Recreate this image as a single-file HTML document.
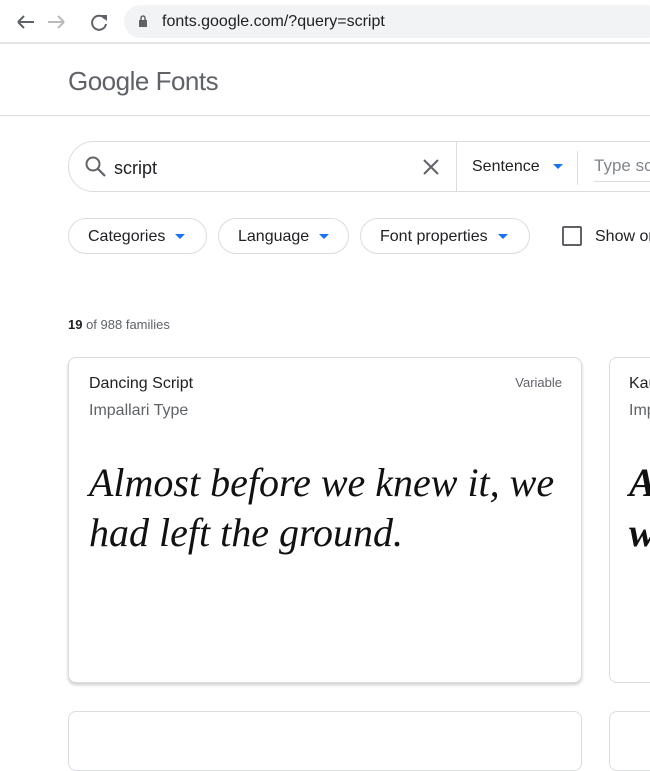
<!DOCTYPE html><html><head><style>
body{margin:0;width:650px;height:733px;overflow:hidden;background:#fff;font-family:"Liberation Sans",sans-serif;position:relative}
.a{position:absolute;white-space:nowrap}
.chip{position:absolute;top:218px;height:36px;border:1px solid #dadce0;border-radius:18px;box-sizing:border-box;font-size:16px;color:#202124;line-height:36px;padding-left:19px;white-space:nowrap}
.tri{display:inline-block;width:0;height:0;border-left:5px solid transparent;border-right:5px solid transparent;border-top:5px solid #1a73e8;vertical-align:middle;margin-left:10px}
.card{position:absolute;border:1px solid #dadce0;border-radius:8px;box-sizing:border-box;background:#fff}
.script{font-family:"Liberation Serif",serif;font-style:italic;font-size:40px;line-height:50px;color:#111;white-space:normal}
</style></head><body>
<div class="a" style="left:0;top:0;width:650px;height:42px;background:#fff;border-bottom:2px solid #e4e4e4"></div>
<svg class="a" style="left:14px;top:12px" width="100" height="20"><path d="M4 10H20M4 10L10 4M4 10L10 16" stroke="#5f6368" stroke-width="2" fill="none"/><path d="M34 10H50M50 10L44 4M50 10L44 16" stroke="#bbb" stroke-width="2" fill="none"/><path d="M91 7A7 7 0 1 0 92 12" stroke="#5f6368" stroke-width="2" fill="none"/><path d="M86 3L93 3L93 9Z" fill="#5f6368"/></svg>
<div class="a" style="left:124px;top:5px;width:540px;height:33px;border-radius:17px;background:#f1f3f4"></div>
<svg class="a" style="left:138px;top:14px" width="10" height="14"><rect x="1" y="6" width="8" height="7" fill="#5f6368"/><path d="M3 6V4A2 2 0 0 1 7 4V6" stroke="#5f6368" stroke-width="1.5" fill="none"/></svg>
<div class="a" style="left:162px;top:13px;font-size:16px;color:#202124">fonts.google.com/?query=script</div>
<div class="a" style="left:68px;top:66px;font-size:26px;color:#5f6368;letter-spacing:-0.5px">Google Fonts</div>
<div class="a" style="left:0;top:115px;width:650px;height:1px;background:#dadce0"></div>
<div class="a" style="left:68px;top:141px;width:620px;height:51px;border:1px solid #dadce0;border-radius:26px;box-sizing:border-box"></div>
<svg class="a" style="left:84px;top:155px" width="24" height="24"><circle cx="9" cy="9" r="6.5" stroke="#5f6368" stroke-width="2" fill="none"/><path d="M14 14L21 21" stroke="#5f6368" stroke-width="2.2"/></svg>
<div class="a" style="left:114px;top:158px;font-size:18px;color:#202124">script</div>
<svg class="a" style="left:422px;top:158px" width="18" height="18"><path d="M2 2L16 16M16 2L2 16" stroke="#5f6368" stroke-width="2"/></svg>
<div class="a" style="left:456px;top:142px;width:1px;height:49px;background:#dadce0"></div>
<div class="a" style="left:472px;top:158px;font-size:16px;color:#202124">Sentence<span class="tri" style="margin-left:13px"></span></div>
<div class="a" style="left:577px;top:151px;width:1px;height:34px;background:#dadce0"></div>
<div class="a" style="left:594px;top:156px;font-size:17px;color:#80868b;border-bottom:1px solid #dadce0;padding-bottom:5px;width:80px">Type sc</div>
<div class="chip" style="left:68px;width:139px">Categories<span class="tri"></span></div>
<div class="chip" style="left:218px;width:131px">Language<span class="tri"></span></div>
<div class="chip" style="left:360px;width:170px">Font properties<span class="tri"></span></div>
<div class="a" style="left:562px;top:226px;width:16px;height:16px;border:2px solid #5f6368;border-radius:2px"></div>
<div class="a" style="left:595px;top:228px;font-size:16px;color:#202124">Show only</div>
<div class="a" style="left:68px;top:317px;font-size:13px;color:#5f6368"><b style="color:#202124">19</b> of 988 families</div>
<div class="card" style="left:68px;top:357px;width:514px;height:326px;box-shadow:0 2px 3px rgba(0,0,0,0.2)">
<div class="a" style="left:20px;top:17px;font-size:16px;color:#202124">Dancing Script</div>
<div class="a" style="left:20px;top:44px;font-size:16px;color:#5f6368">Impallari Type</div>
<div class="a" style="right:19px;top:17px;font-size:13px;color:#5f6368">Variable</div>
<div class="a script" style="left:20px;top:100px;width:490px">Almost before we knew it, we had left the ground.</div>
</div>
<div class="card" style="left:609px;top:357px;width:100px;height:326px">
<div class="a" style="left:19px;top:17px;font-size:16px;color:#202124">Kau</div>
<div class="a" style="left:19px;top:44px;font-size:16px;color:#5f6368">Imp</div>
<div class="a script" style="left:19px;top:100px;font-weight:bold">A<br>w</div>
</div>
<div class="card" style="left:68px;top:711px;width:514px;height:60px"></div>
<div class="card" style="left:609px;top:711px;width:100px;height:60px"></div>
</body></html>
